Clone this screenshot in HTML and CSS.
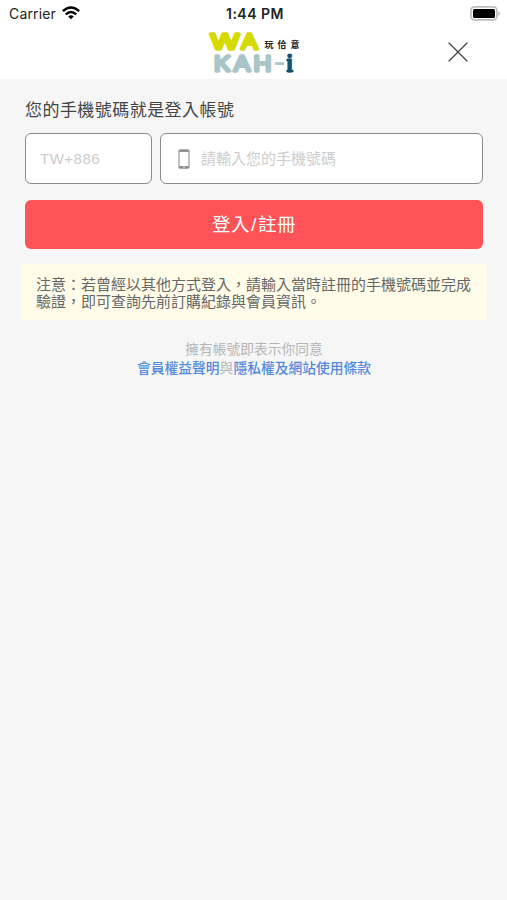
FILE: index.html
```html
<!DOCTYPE html>
<html lang="zh-Hant">
<head>
    <meta charset="UTF-8">
    <meta name="viewport" content="width=device-width, initial-scale=1.0">
    <title>WA KAH-i 玩佮意</title>
    <link rel="stylesheet" href="styles.css">
</head>
<body>
    <div class="status-bar">
        <div class="carrier">
            <span>Carrier</span>
            <svg class="wifi" width="18" height="14" viewBox="0 0 18 14" fill="none" stroke="#000" stroke-width="2.5">
                <path d="M0.9 5.2Q9 -2.3 17.1 5.2"/>
                <path d="M3.8 8.4Q9 3.6 14.2 8.4"/>
                <path d="M9 13.3L6.2 10.5Q9 8.2 11.8 10.5Z" fill="#000" stroke="none"/>
            </svg>
        </div>
        <div class="time">1:44 PM</div>
        <svg class="battery" width="31" height="15" viewBox="0 0 31 15">
            <rect x="0.9" y="0.9" width="26" height="13" rx="3.6" fill="#fff" stroke="#bdbdbd" stroke-width="1.7"/>
            <rect x="3" y="3" width="22" height="9" rx="1.5" fill="#000"/>
            <path d="M28.5 5Q31 7.5 28.5 10Z" fill="#aaa"/>
        </svg>
    </div>

    <header class="header">
        <svg class="logo" width="94" height="46" viewBox="0 0 94 46">
            <text class="logo-wa" x="3.5" y="18.5" textLength="29" lengthAdjust="spacingAndGlyphs">W</text>
            <text class="logo-wa" x="34" y="18.5" textLength="17" lengthAdjust="spacingAndGlyphs">A</text>
            <text class="logo-name" x="57.5" y="18">玩佮意</text>
            <text class="logo-kah" x="7" y="40.5" textLength="16" lengthAdjust="spacingAndGlyphs">K</text>
            <text class="logo-kah" x="26.5" y="40.5" textLength="17" lengthAdjust="spacingAndGlyphs">A</text>
            <text class="logo-kah" x="46.5" y="40.5" textLength="18" lengthAdjust="spacingAndGlyphs">H</text>
            <text class="logo-dash" x="67" y="40" textLength="11" lengthAdjust="spacingAndGlyphs">-</text>
            <text class="logo-i" x="79.5" y="41.5">i</text>
            <path d="M80.5 30H83M80.5 41H85.5" stroke="#12506f" stroke-width="2.4" stroke-linecap="round"/>
        </svg>
        <button class="close-btn" aria-label="關閉">
            <svg width="20" height="20" viewBox="0 0 20 20" stroke="#444" stroke-width="1.3" stroke-linecap="round">
                <path d="M1 1L19 19M19 1L1 19"/>
            </svg>
        </button>
    </header>

    <main class="container">
        <h1 class="title">您的手機號碼就是登入帳號</h1>
        <form class="login-form">
            <div class="phone-row">
                <div class="field country">
                    <input type="text" placeholder="TW+886">
                </div>
                <div class="field phone">
                    <svg width="12" height="20" viewBox="0 0 12 20" fill="none" stroke="#8e8e8e">
                        <rect x="1" y="0.8" width="10" height="18.4" rx="1.2" stroke-width="1.1"/>
                        <path d="M1 2H11M1 18H11" stroke-width="2.2"/>
                        <path d="M5 18H7" stroke="#ddd" stroke-width="1"/>
                    </svg>
                    <input type="tel" placeholder="請輸入您的手機號碼">
                </div>
            </div>
            <button type="button" class="login-btn">登入<span class="slash">/</span>註冊</button>
        </form>

        <div class="notice">注意：若曾經以其他方式登入，請輸入當時註冊的手機號碼並完成<br>驗證，即可查詢先前訂購紀錄與會員資訊。</div>

        <div class="terms">
            <div>擁有帳號即表示你同意</div>
            <div><a>會員權益聲明</a>與<a>隱私權及網站使用條款</a></div>
        </div>
    </main>
</body>
</html>
```

FILE: styles.css
```css
* {
    box-sizing: border-box;
    margin: 0;
    padding: 0;
}

body {
    min-height: 900px;
    font-family: "Liberation Sans", "Noto Sans CJK TC", sans-serif;
    background-color: #f6f6f6;
    color: #444;
}

.status-bar {
    display: grid;
    grid-template-columns: 1fr auto 1fr;
    align-items: center;
    height: 26px;
    padding: 0 6px 0 9px;
    background-color: #fff;
    font-family: Inter, sans-serif;
    font-size: 14px;
    color: #222;
}

.carrier {
    display: flex;
    align-items: center;
    gap: 6px;
    letter-spacing: 0.15px;
}

.time {
    font-weight: 600;
    letter-spacing: 0.5px;
}

.battery {
    justify-self: end;
}

.header {
    display: grid;
    grid-template-columns: 1fr auto 1fr;
    align-items: center;
    height: 53px;
    padding: 0 39px;
    background-color: #fff;
}

.logo {
    grid-column: 2;
    overflow: visible;
}

.logo text {
    font-family: Inter, sans-serif;
    font-size: 20.5px;
    font-weight: 300;
    stroke-width: 3.3;
    stroke-linejoin: round;
    stroke-linecap: round;
}

.logo .logo-wa {
    fill: #d5da00;
    stroke: #d5da00;
}

.logo .logo-kah,
.logo .logo-dash {
    fill: #a9c5c8;
    stroke: #a9c5c8;
}

.logo .logo-dash {
    stroke-width: 1.5;
}

.logo .logo-i {
    fill: #12506f;
    stroke: #12506f;
    font-size: 23px;
    font-weight: 700;
    stroke-width: 1;
}

.logo .logo-name {
    font-family: "Noto Sans CJK TC", sans-serif;
    font-size: 9px;
    font-weight: 700;
    letter-spacing: 4px;
    fill: #222;
    stroke-width: 0;
}

.close-btn {
    display: flex;
    justify-self: end;
    margin-bottom: 1px;
    border: none;
    background: none;
    cursor: pointer;
}

.container {
    padding: 17px 24px 0 25px;
}

.title {
    height: 27px;
    margin-bottom: 10px;
    font-size: 17px;
    font-weight: 400;
    line-height: 29px;
    letter-spacing: 0.45px;
}

.phone-row {
    display: flex;
    gap: 8px;
}

.field {
    display: flex;
    align-items: center;
    height: 51px;
    border: 1px solid #8c8c8c;
    border-radius: 6px;
    background-color: #fff;
}

.country {
    width: 127px;
    padding: 0 14px;
}

.phone {
    flex: 1;
    gap: 11px;
    padding: 0 17px;
}

.field input {
    width: 100%;
    min-width: 0;
    border: none;
    outline: none;
    background: none;
    font-family: inherit;
    font-size: 15px;
}

.country input {
    letter-spacing: 0.5px;
}

.field svg {
    flex-shrink: 0;
}

.field input::placeholder {
    color: #ccc;
}

.login-btn {
    display: block;
    width: 100%;
    height: 49px;
    margin-top: 16px;
    padding-bottom: 3px;
    border: none;
    border-radius: 6px;
    background-color: #ff5357;
    color: #fff;
    font-family: inherit;
    font-size: 18.5px;
    letter-spacing: 0.6px;
    cursor: pointer;
}

.slash {
    margin: 0 1px;
}

.notice {
    height: 56px;
    margin: 15px -4px 0;
    padding: 12px 15px;
    background-color: #fffce9;
    color: #666;
    font-size: 15px;
    line-height: 17px;
    white-space: nowrap;
}

.terms {
    margin-top: 20px;
    color: #b5b5b5;
    font-size: 13.75px;
    line-height: 19px;
    text-align: center;
}

.terms a {
    color: #5189de;
    font-weight: 500;
}
```
